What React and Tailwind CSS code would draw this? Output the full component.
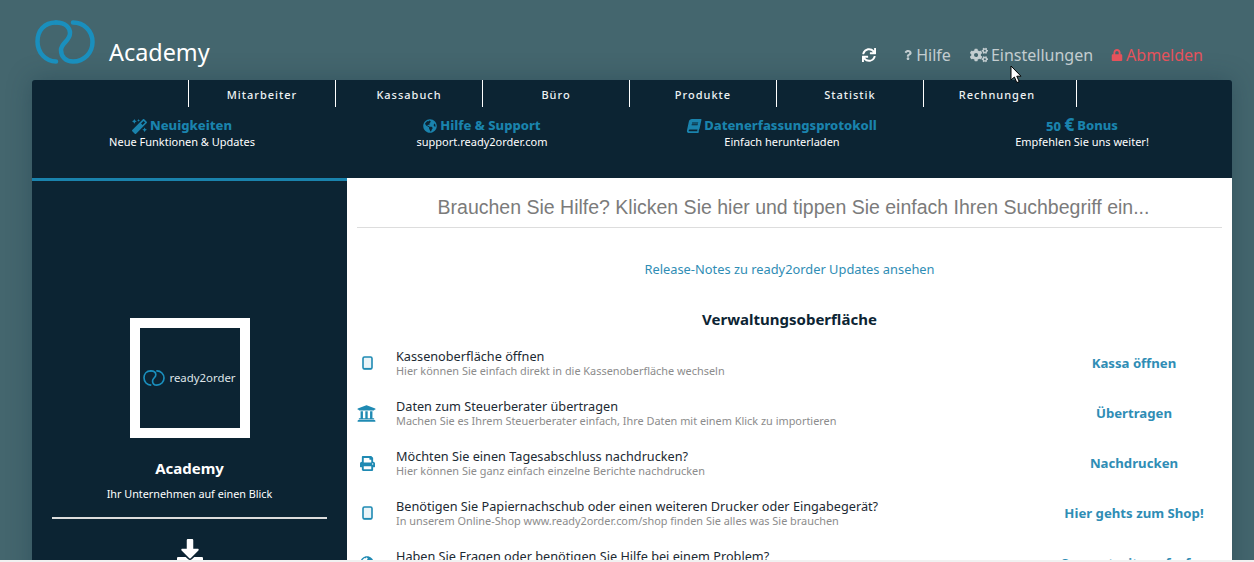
import { FaSync, FaQuestion, FaCogs, FaLock, FaMagic, FaGlobeAmericas, FaBook, FaUniversity, FaPrint, FaDownload } from "react-icons/fa";

const navItems = ["Mitarbeiter", "Kassabuch", "Büro", "Produkte", "Statistik", "Rechnungen"];

const infoItems = [
  { icon: <FaMagic className="text-[15px]" />, title: "Neuigkeiten", sub: "Neue Funktionen & Updates" },
  { icon: <FaGlobeAmericas className="text-[14px]" />, title: "Hilfe & Support", sub: "support.ready2order.com" },
  { icon: <FaBook className="-skew-x-12 text-[14px]" />, title: "Datenerfassungsprotokoll", sub: "Einfach herunterladen" },
  { icon: <span>50 <span className="text-[17px] leading-none">€</span></span>, title: "Bonus", sub: "Empfehlen Sie uns weiter!" },
];

function Tablet() {
  return (
    <svg viewBox="0 0 11 14" className="h-[14px] w-[11px]" fill="none">
      <rect x="1" y="1" width="9" height="12" rx="1.5" stroke="#1f8ab3" strokeWidth="1.6" fill="#eaf4f8" />
      <path d="M1.5 12.6H9.5" stroke="#1f8ab3" strokeWidth="1.4" />
    </svg>
  );
}

const rows = [
  { icon: <Tablet />, title: "Kassenoberfläche öffnen", sub: "Hier können Sie einfach direkt in die Kassenoberfläche wechseln", action: "Kassa öffnen" },
  { icon: <FaUniversity className="-ml-[2px] text-[19px]" />, title: "Daten zum Steuerberater übertragen", sub: "Machen Sie es Ihrem Steuerberater einfach, Ihre Daten mit einem Klick zu importieren", action: "Übertragen" },
  { icon: <FaPrint className="text-[15px]" />, title: "Möchten Sie einen Tagesabschluss nachdrucken?", sub: "Hier können Sie ganz einfach einzelne Berichte nachdrucken", action: "Nachdrucken" },
  { icon: <Tablet />, title: "Benötigen Sie Papiernachschub oder einen weiteren Drucker oder Eingabegerät?", sub: "In unserem Online-Shop www.ready2order.com/shop finden Sie alles was Sie brauchen", action: "Hier gehts zum Shop!" },
  { icon: <FaGlobeAmericas className="text-[14px]" />, title: "Haben Sie Fragen oder benötigen Sie Hilfe bei einem Problem?", sub: "Auf unserer Supportseite finden Sie alle Antworten", action: "Supportseite aufrufen" },
];

function Logo({ className }) {
  return (
    <svg viewBox="0 0 60 44" className={className} fill="none" stroke="#1a8fbd" strokeWidth="4.5" strokeLinecap="round">
      <path d="M21 2.5C9 2.5 2.5 11 2.5 21.5C2.5 33 11 41.5 21 41.5" />
      <path d="M21 2.5C31 2.5 35 8 35 13C35 21 26 23 26 30C26 37 31 41.5 38 41.5C49 41.5 57.5 33 57.5 22C57.5 11 49 2.5 38 2.5" />
    </svg>
  );
}

export default function App() {
  return (
    <div className="relative h-[562px] overflow-hidden bg-[#44666e] font-['Noto_Sans',sans-serif]">
      <header className="flex h-[80px] items-end justify-between pl-[35px] pr-[51px]">
        <div className="flex items-end gap-[14px] pb-[16px]">
          <Logo className="h-[44px] w-[60px]" />
          <span className="relative top-[3px] text-[23.4px] leading-[30px] text-white">Academy</span>
        </div>
        <nav className="flex items-center pb-[15px] text-[16px] leading-[20px]">
          <FaSync className="mr-[27px] text-[14px] text-white" />
          <span className="mr-[19px] flex items-center gap-[3px] text-[#c3cdd0]"><FaQuestion className="text-[10px]" />Hilfe</span>
          <span className="mr-[18px] flex items-center gap-[3px] text-[#c3cdd0]"><FaCogs className="text-[18px]" />Einstellungen</span>
          <span className="flex items-center gap-[3px] text-[#e5525b]"><FaLock className="text-[12px]" />Abmelden</span>
        </nav>
      </header>

      <main className="mx-[32px] w-[1200px] rounded-t-[3px] bg-[#0c2433] shadow-[0_0_24px_rgba(20,50,65,0.35)]">
        <div className="flex h-[27px] pl-[156px]">
          {navItems.map((item, i) => (
            <div
              key={item}
              className={`flex items-center justify-center border-l border-white pt-[3px] text-[11px] font-medium tracking-[1px] text-[#eef2f3] ${i === 5 ? "w-[154px] border-r pr-[6px]" : "w-[147px]"}`}
            >
              {item}
            </div>
          ))}
        </div>

        <div className="grid h-[71px] grid-cols-4 pt-[10px] text-center">
          {infoItems.map((item) => (
            <div key={item.title}>
              <div className="flex h-[18px] items-center justify-center gap-[3px] text-[13px] font-extrabold text-[#1a83ad]">
                {item.icon}
                <span>{item.title}</span>
              </div>
              <div className="text-[11px] leading-[14px] text-white">{item.sub}</div>
            </div>
          ))}
        </div>

        <div className="flex h-[482px]">
          <aside className="flex w-[315px] shrink-0 flex-col items-center border-t-[3px] border-[#1a83ad] bg-[#0c2433] pt-[137px]">
            <div className="flex h-[120px] w-[120px] items-center justify-center border-[10px] border-white bg-[#0c2433]">
              <div className="flex items-center gap-[4px]">
                <Logo className="h-[16px] w-[22px]" />
                <span className="text-[11.4px] leading-none text-[#dfe5e8]">ready2order</span>
              </div>
            </div>
            <h2 className="mt-[20px] text-[15px] leading-[20px] font-bold text-white">Academy</h2>
            <p className="mt-[9px] text-[10.8px] leading-[14px] text-white">Ihr Unternehmen auf einen Blick</p>
            <div className="mt-[16px] h-[2px] w-[275px] bg-[#dddddd]" />
            <FaDownload className="mt-[20px] text-[26px] text-white" />
          </aside>

          <section className="flex-1 bg-white px-[10px]">
            <div className="h-[50px] border-b border-[#dddddd] pl-[8px] pt-[15px] text-center font-['Liberation_Sans',sans-serif] text-[19.5px] leading-[28px] text-[#7b7b7b]">
              Brauchen Sie Hilfe? Klicken Sie hier und tippen Sie einfach Ihren Suchbegriff ein...
            </div>
            <p className="mt-[33px] text-center text-[12.85px] leading-[16px] text-[#2f8db5]">Release-Notes zu ready2order Updates ansehen</p>
            <h3 className="mt-[32px] text-center text-[15px] leading-[20px] font-bold text-[#0c2433]">Verwaltungsoberfläche</h3>
            <div className="mt-[9px]">
              {rows.map((row) => (
                <div key={row.title} className="flex h-[50px] items-center">
                  <div className="flex w-[20px] justify-center text-[#1f8ab3]">{row.icon}</div>
                  <div className="ml-[19px] flex-1">
                    <div className="text-[12.7px] leading-[15px] text-[#1c2a33]">{row.title}</div>
                    <div className="text-[10.9px] leading-[14px] text-[#8c8c8c]">{row.sub}</div>
                  </div>
                  <div className="w-[176px] pt-[1px] text-center text-[13.2px] font-bold text-[#2f8db5]">{row.action}</div>
                </div>
              ))}
            </div>
          </section>
        </div>
      </main>

      <svg viewBox="0 0 12 19" className="absolute left-[1010px] top-[65px] h-[19px] w-[12px]">
        <path d="M1 1V15L4.4 12L6.8 17.6L9.2 16.6L6.8 11.2H11Z" fill="#fff" stroke="#000" strokeWidth="1" />
      </svg>
      <div className="absolute inset-x-0 bottom-0 h-[2px] bg-[#f1f1f1]" />
    </div>
  );
}
